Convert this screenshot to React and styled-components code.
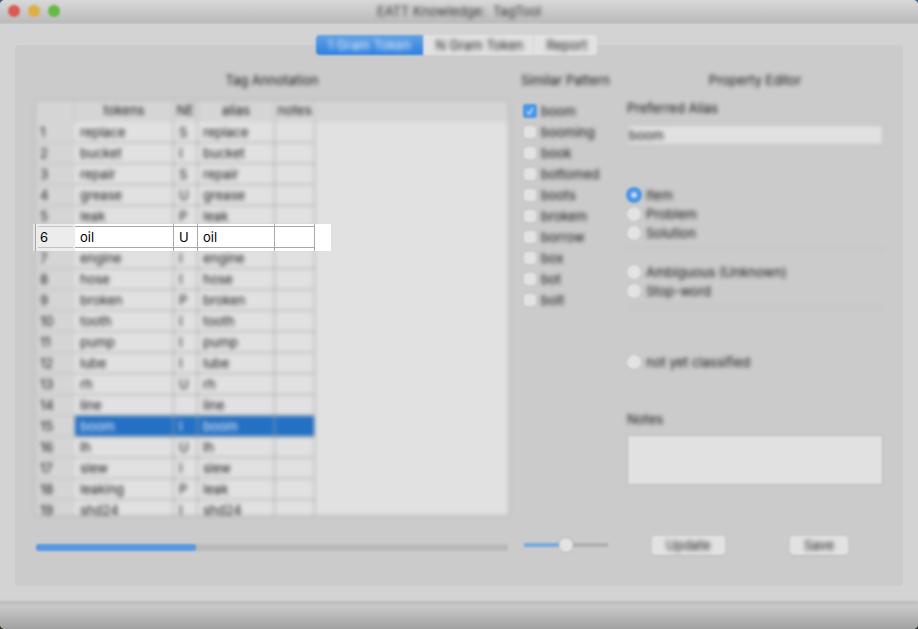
import React from "react";
import styled, { createGlobalStyle, css } from "styled-components";

const GlobalStyle = createGlobalStyle`
  * { box-sizing: border-box; }
  body {
    margin: 0;
    background: linear-gradient(#35608f, #2c3226);
    font-family: Inter, "Liberation Sans", sans-serif;
    font-size: 13px;
    line-height: 16px;
    color: #141414;
  }
  button, input, textarea { font: inherit; color: inherit; margin: 0; }
`;

const soft = css`
  filter: blur(2px);
`;

const Window = styled.div`
  display: flex;
  flex-direction: column;
  height: 100vh;
  min-height: 600px;
  overflow: hidden;
  background: #d3d3d3;
  border-radius: 5px;
`;

const TitleBar = styled.header`
  flex: none;
  display: grid;
  grid-template-columns: 1fr auto 1fr;
  align-items: center;
  height: 24px;
  padding: 0 8px 2px;
  background: linear-gradient(#d8d8d8, #bcbcbc 22px, #c8c8c8);
`;

const Lights = styled.div`
  display: flex;
  gap: 8px;
  filter: blur(1px);
`;

const Light = styled.button`
  width: 12px;
  height: 12px;
  padding: 0;
  border: 0;
  border-radius: 50%;
  background: ${(p) => p.$color};
`;

const Title = styled.h1`
  margin: 0;
  font-size: 13px;
  font-weight: 400;
  line-height: 16px;
  color: #333;
  white-space: pre;
  ${soft}
`;

const Content = styled.main`
  flex: 1;
  min-height: 0;
  display: flex;
  flex-direction: column;
  padding: 11px 15px 16px;
`;

const Tabs = styled.div`
  flex: none;
  align-self: center;
  z-index: 1;
  display: flex;
  height: 20px;
  margin-right: 5px;
  filter: blur(1px);
`;

const Tab = styled.button`
  padding: 0 10px 0 12px;
  border: 0;
  border-left: 1px solid #d6d6d6;
  background: #e2e2e2;
  white-space: nowrap;
  &:first-child { padding: 0 12px; border-left: 0; border-radius: 4px 0 0 4px; }
  &:last-child { border-radius: 0 4px 4px 0; }
  &[aria-selected="true"] {
    background: linear-gradient(#64a2e4, #2b7fe0);
    color: #f2f6fb;
  }
`;

const ButtonText = styled.span`
  display: block;
  ${soft}
`;

const Group = styled.section`
  flex: 1;
  min-height: 0;
  display: flex;
  margin-top: -10px;
  padding: 27px 20px 31px;
  background: #cbcbcb;
  border-radius: 4px;
`;

const Column = styled.div`
  display: flex;
  flex-direction: column;
  min-width: 0;
  flex: ${(p) => p.$flex || "none"};
  width: ${(p) => p.$width || "auto"};
  margin-left: ${(p) => p.$gap || "0"};
`;

const Heading = styled.h2`
  margin: 0 0 12px;
  font-size: 13px;
  line-height: 16px;
  font-weight: 400;
  text-align: center;
  white-space: nowrap;
  ${soft}
`;

const TableArea = styled.div`
  position: relative;
  flex: 1 1 0;
  min-height: 0;
  display: flex;
`;

const TableFrame = styled.div`
  flex: 1;
  overflow: hidden;
  border: 1px solid #b0b0b0;
  background: linear-gradient(#d5d5d5 21px, #e1e1e1 21px);
  ${soft}
`;

const Grid = styled.table`
  table-layout: fixed;
  width: 279px;
  border-collapse: separate;
  border-spacing: 0;
`;

const Head = styled.th`
  height: 21px;
  padding: 0 0 3px;
  font-weight: 400;
  border-right: 1px solid #c0c0c0;
`;

const RowHead = styled.th`
  height: 21px;
  padding: 0 4px;
  text-align: left;
  font-weight: 400;
  background: #d5d5d5;
  border-bottom: 1px solid #bdbdbd;
`;

const Cell = styled.td`
  height: 21px;
  padding: 0 5px;
  border-right: 1px solid #a4a4a4;
  border-bottom: 1px solid #a4a4a4;
  background: ${(p) => (p.$selected ? "#2370c4" : "#e1e1e1")};
  color: ${(p) => (p.$selected ? "#f0f4fa" : "inherit")};
`;

const Spotlight = styled.div`
  position: absolute;
  top: 124px;
  left: -2px;
  width: 298px;
  height: 27px;
  background: #fff;
  border-left: 2px solid #e4e4e4;
  color: #000;
`;

const SpotGrid = styled(Grid)`
  width: 280px;
  border-left: 1px solid #a8a8a8;
`;

const lines = (color) => css`
  background-image: linear-gradient(
    transparent 2px, ${color} 2px 3px, transparent 3px 23px,
    ${color} 23px 24px, transparent 24px
  );
`;

const SpotHead = styled.th`
  height: 27px;
  padding: 0 4px 2px;
  text-align: left;
  font-weight: 400;
  background-color: #ececec;
  ${lines("#c2c2c2")}
  background-size: 35px 27px;
  background-position: 2px 0;
  background-repeat: no-repeat;
`;

const SpotCell = styled.td`
  height: 27px;
  padding: 0 5px 2px;
  border-right: 1px solid #a8a8a8;
  ${lines("#a8a8a8")}
`;

const BottomRow = styled.div`
  flex: none;
  display: flex;
  align-items: center;
  justify-content: ${(p) => p.$justify || "flex-start"};
  height: 20px;
  margin-top: ${(p) => p.$top || "19px"};
  padding: ${(p) => p.$pad || "0"};
  filter: blur(1px);
`;

const Track = styled.div`
  width: 100%;
  height: 7px;
  border-radius: 3px;
  background: #b9b9b9;
`;

const Fill = styled.div`
  height: 7px;
  border-radius: 3px;
  background: #5698e2;
`;

const CheckList = styled.div`
  display: flex;
  flex-direction: column;
  padding-left: 4px;
`;

const Option = styled.label`
  display: flex;
  align-items: center;
  gap: 5px;
  height: ${(p) => p.$height};
  white-space: nowrap;
`;

const OptionText = styled.span`
  ${soft}
`;

const Check = styled.input`
  appearance: none;
  width: 12px;
  height: 12px;
  border-radius: 3px;
  background: #e3e3e3;
  box-shadow: 0 0 1px #a8a8a8;
  filter: blur(1px);
  &:checked {
    width: 14px;
    height: 14px;
    margin: 0 -1px;
    background: #4c96e8
      url("data:image/svg+xml,%3Csvg xmlns='http://www.w3.org/2000/svg' viewBox='0 0 14 14'%3E%3Cpath d='M4 7.5l2.2 2.5L10 4' fill='none' stroke='%23b4d2f2' stroke-width='1.8'/%3E%3C/svg%3E");
    box-shadow: none;
  }
`;

const Radio = styled.input`
  appearance: none;
  width: 14px;
  height: 14px;
  border-radius: 50%;
  background: #e3e3e3;
  box-shadow: 0 0 1px #a8a8a8;
  filter: blur(1px);
  &:checked {
    width: 16px;
    height: 16px;
    margin: 0 -1px;
    background: radial-gradient(circle, #e0eaf5 1px, #4c96e8 4px);
    box-shadow: none;
  }
`;

const Slider = styled.input`
  appearance: none;
  width: 84px;
  height: 16px;
  background: linear-gradient(90deg, #78a9e0 50%, #b0b0b0 50%) center / 100% 4px no-repeat;
  &::-webkit-slider-thumb {
    appearance: none;
    width: 14px;
    height: 14px;
    border-radius: 50%;
    background: #e3e3e3;
    box-shadow: 0 0 2px #999;
  }
`;

const FieldLabel = styled.label`
  line-height: 16px;
  margin-top: ${(p) => p.$top || "0"};
  ${soft}
`;

const TextField = styled.input`
  width: 100%;
  height: 20px;
  margin-top: 9px;
  padding: 0 1px;
  border: 1px solid #c0c0c0;
  background: #e1e1e1;
  ${soft}
`;

const NotesField = styled.textarea`
  display: block;
  width: 100%;
  height: 50px;
  margin-top: 8px;
  padding: 2px;
  resize: none;
  border: 1px solid #bcbcbc;
  background: #e1e1e1;
  filter: blur(1px);
`;

const RadioSet = styled.div`
  display: flex;
  flex-direction: column;
  margin-top: ${(p) => p.$top};
`;

const Rule = styled.hr`
  width: 100%;
  margin: 6px 0 0;
  border: 0;
  border-top: 1px solid #c0c0c0;
  ${soft}
`;

const PushButton = styled.button`
  height: 19px;
  padding: 0 14px;
  border: 0;
  border-radius: 4px;
  background: #e2e2e2;
  box-shadow: 0 1px 1px #b4b4b4;
`;

const StatusBar = styled.footer`
  flex: none;
  height: 27px;
  box-shadow: 0 0 3px #aaa;
  background: linear-gradient(#bcbcbc, #c9c9c9 4px, #a2a2a2);
`;

const HIGHLIGHT = 6;
const SELECTED = 15;
const rows = [
  ["replace", "S", "replace"], ["bucket", "I", "bucket"], ["repair", "S", "repair"],
  ["grease", "U", "grease"], ["leak", "P", "leak"], ["oil", "U", "oil"],
  ["engine", "I", "engine"], ["hose", "I", "hose"], ["broken", "P", "broken"],
  ["tooth", "I", "tooth"], ["pump", "I", "pump"], ["lube", "I", "lube"],
  ["rh", "U", "rh"], ["line", "", "line"], ["boom", "I", "boom"],
  ["lh", "U", "lh"], ["slew", "I", "slew"], ["leaking", "P", "leak"],
  ["shd24", "I", "shd24"],
];
const patterns = ["boom", "booming", "book", "bottomed", "boots", "brokem", "borrow", "box", "bot", "bolt"];
const classes = [
  { top: "40px", items: ["Item", "Problem", "Solution"], rule: true },
  { top: "13px", items: ["Ambiguous (Unknown)", "Stop-word"], rule: true },
  { top: "45px", items: ["not yet classified"], rule: false },
];
const progress = 34;

const Columns = () => (
  <colgroup>
    {[39, 99, 24, 77, 40].map((w) => <col key={w} width={w} />)}
  </colgroup>
);

function TokenTable() {
  return (
    <TableArea>
      <TableFrame>
        <Grid>
          <Columns />
          <thead>
            <tr>
              <Head />
              {["tokens", "NE", "alias", "notes"].map((h) => <Head key={h} scope="col">{h}</Head>)}
            </tr>
          </thead>
          <tbody>
            {rows.map((row, i) => {
              const n = i + 1;
              const lifted = n === HIGHLIGHT;
              return (
                <tr key={n}>
                  <RowHead scope="row">{lifted ? "" : n}</RowHead>
                  {[...row, ""].map((value, c) => (
                    <Cell key={c} $selected={n === SELECTED}>{lifted ? "" : value}</Cell>
                  ))}
                </tr>
              );
            })}
          </tbody>
        </Grid>
      </TableFrame>
      <Spotlight>
        <SpotGrid>
          <Columns />
          <tbody>
            <tr>
              <SpotHead scope="row">{HIGHLIGHT}</SpotHead>
              {[...rows[HIGHLIGHT - 1], ""].map((value, c) => <SpotCell key={c}>{value}</SpotCell>)}
            </tr>
          </tbody>
        </SpotGrid>
      </Spotlight>
    </TableArea>
  );
}

export default function App() {
  return (
    <>
      <GlobalStyle />
      <Window>
        <TitleBar>
          <Lights>
            <Light $color="#dc5a54" aria-label="Close" />
            <Light $color="#deb043" aria-label="Minimize" />
            <Light $color="#66b946" aria-label="Zoom" />
          </Lights>
          <Title>{"EATT Knowledge:  TagTool"}</Title>
        </TitleBar>
        <Content>
          <Tabs role="tablist">
            <Tab role="tab" aria-selected="true"><ButtonText>1 Gram Token</ButtonText></Tab>
            <Tab role="tab" aria-selected="false"><ButtonText>N Gram Token</ButtonText></Tab>
            <Tab role="tab" aria-selected="false"><ButtonText>Report</ButtonText></Tab>
          </Tabs>
          <Group>
            <Column $flex="1">
              <Heading>Tag Annotation</Heading>
              <TokenTable />
              <BottomRow $pad="4px 1px 0">
                <Track role="progressbar" aria-label="Annotation progress" aria-valuenow={progress}>
                  <Fill style={{ width: `${progress}%` }} />
                </Track>
              </BottomRow>
            </Column>
            <Column $width="91px" $gap="11px">
              <Heading>Similar Pattern</Heading>
              <CheckList>
                {patterns.map((name, i) => (
                  <Option key={name} $height="21px">
                    <Check type="checkbox" defaultChecked={i === 0} />
                    <OptionText>{name}</OptionText>
                  </Option>
                ))}
              </CheckList>
              <BottomRow $top="auto" $pad="0 0 0 4px">
                <Slider type="range" min="0" max="100" defaultValue="50" aria-label="Similarity" />
              </BottomRow>
            </Column>
            <Column $width="256px" $gap="16px">
              <Heading>Property Editor</Heading>
              <FieldLabel htmlFor="alias">Preferred Alias</FieldLabel>
              <TextField id="alias" defaultValue="boom" />
              {classes.map((set) => (
                <React.Fragment key={set.top}>
                  <RadioSet $top={set.top}>
                    {set.items.map((name) => (
                      <Option key={name} $height="19px">
                        <Radio type="radio" name="class" defaultChecked={name === "Item"} />
                        <OptionText>{name}</OptionText>
                      </Option>
                    ))}
                  </RadioSet>
                  {set.rule && <Rule />}
                </React.Fragment>
              ))}
              <FieldLabel htmlFor="notes" $top="40px">Notes</FieldLabel>
              <NotesField id="notes" />
              <BottomRow $top="auto" $justify="space-between" $pad="0 35px 0 25px">
                <PushButton><ButtonText>Update</ButtonText></PushButton>
                <PushButton><ButtonText>Save</ButtonText></PushButton>
              </BottomRow>
            </Column>
          </Group>
        </Content>
        <StatusBar />
      </Window>
    </>
  );
}
